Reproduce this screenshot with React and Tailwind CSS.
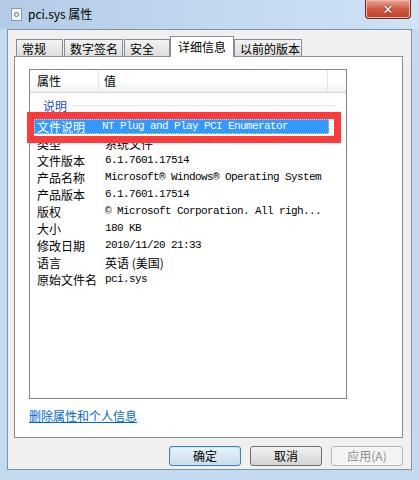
import React from 'react';

const cjk = '"Noto Sans CJK SC", "Liberation Sans", sans-serif';
const mono = '"Liberation Mono", "Noto Sans CJK SC", monospace';

const rows = [
  ['类型', '系统文件', true],
  ['文件版本', '6.1.7601.17514'],
  ['产品名称', 'Microsoft® Windows® Operating System'],
  ['产品版本', '6.1.7601.17514'],
  ['版权', '© Microsoft Corporation. All righ...'],
  ['大小', '180 KB'],
  ['修改日期', '2010/11/20 21:33'],
  ['语言', '英语 (美国)', true],
  ['原始文件名', 'pci.sys'],
];

function Tab({ label, w, active }) {
  if (active) {
    return (
      <div
        className="relative z-10 -mx-[1px] flex h-[21px] items-center justify-center border border-b-0 border-[#898c95] bg-white text-[12px] text-black"
        style={{ width: w }}
      >
        {label}
      </div>
    );
  }
  return (
    <div
      className="mt-[3px] flex h-[18px] items-center border border-b-0 border-[#898c95] bg-gradient-to-b from-[#f3f3f3] to-[#dcdcdc] pl-[5px] text-[12px] text-black"
      style={{ width: w }}
    >
      {label}
    </div>
  );
}

function Button({ label, kind }) {
  const base = 'flex h-[20px] w-[72px] items-center justify-center rounded-[3px] border text-[12px]';
  if (kind === 'default')
    return <div className={`${base} border-[#3c7fb1] bg-gradient-to-b from-[#eaf3fa] to-[#c8dcea] text-black shadow-[inset_0_0_0_1px_#bfe6fb]`}>{label}</div>;
  if (kind === 'disabled')
    return <div className={`${base} border-[#b5b9bd] bg-[#f4f4f4] text-[#8d8d8d]`}>{label}</div>;
  return <div className={`${base} border-[#707070] bg-gradient-to-b from-[#f3f3f3] to-[#d3d3d3] text-black`}>{label}</div>;
}

export default function App() {
  return (
    <div className="relative flex h-[480px] w-[419px] flex-col overflow-hidden bg-[#c4daf1]" style={{ fontFamily: cjk }}>
      {/* title bar */}
      <div className="flex h-[29px] items-start bg-gradient-to-r from-[#b3cbe6] via-[#c2d8ef] to-[#cfe2f6]">
        <div className="ml-[11px] mt-[8px] flex h-[13px] w-[11px] items-center justify-center border border-[#8a9bb0] bg-[#f4f6f8]">
          <div className="h-[5px] w-[5px] rounded-full border border-[#5b6f88]" />
        </div>
        <div className="ml-[6px] mt-[6px] text-[12px] leading-[16px] text-black">pci.sys 属性</div>
        <div className="ml-auto mr-[8px] flex h-[19px] w-[46px] items-center justify-center rounded-b-[4px] border border-t-0 border-[#6b2a20] bg-gradient-to-b from-[#e9a89a] via-[#cf5a42] to-[#c2402a] shadow-[inset_0_0_0_1px_#f0b7aa]">
          <span className="text-[13px] font-bold leading-none text-white" style={{ fontFamily: '"DejaVu Sans", sans-serif', textShadow: '0 0 2px #3a1a14' }}>✕</span>
        </div>
      </div>

      {/* client */}
      <div className="mx-[7px] mb-[10px] flex flex-1 flex-col border border-[#8093aa] bg-[#f0f0f0] pl-[6px] pr-[8px] pt-[6px]">
        {/* tabs */}
        <div className="flex h-[21px] items-start gap-[1px] pl-[2px]">
          <Tab label="常规" w={47} />
          <Tab label="数字签名" w={59} />
          <Tab label="安全" w={46} />
          <Tab label="详细信息" w={64} active />
          <Tab label="以前的版本" w={68} />
        </div>

        {/* panel */}
        <div className="-mt-[1px] flex h-[382px] flex-col border border-[#898c95] bg-white pl-[14px] pt-[12px]">
          <div className="flex h-[330px] w-[318px] flex-col border border-[#828790] bg-white">
            <div className="flex h-[23px] border-b border-[#d5d5d5] bg-gradient-to-b from-white via-white to-[#f0f1f3] text-[12px] text-black">
              <div className="flex w-[69px] items-center border-r border-[#e1e3e6] pl-[7px]">属性</div>
              <div className="flex w-[229px] items-center border-r border-[#e1e3e6] pl-[5px]">值</div>
            </div>
            <div className="flex h-[25px] items-center pl-[13px]">
              <span className="text-[12px] text-[#1e50b4]">说明</span>
              <div className="ml-[5px] mr-[10px] h-[1px] flex-1 bg-[#dfe4ea]" />
            </div>
            <div className="flex h-[17px] items-center pl-[4px]">
              <div className="flex h-[15px] w-[295px] items-center bg-[#3399ff] text-white outline-1 outline-dotted outline-[#b8d8ff] -outline-offset-1">
                <span className="w-[68px] pl-[3px] text-[12px]">文件说明</span>
                <span className="text-[11px] tracking-[-0.6px]" style={{ fontFamily: mono }}>NT Plug and Play PCI Enumerator</span>
              </div>
            </div>
            {rows.map(([k, v, cn]) => (
              <div key={k} className="flex h-[17px] items-center pl-[7px] text-black">
                <span className="w-[68px] text-[12px]">{k}</span>
                {cn ? (
                  <span className="text-[12px]">{v}</span>
                ) : (
                  <span className="whitespace-pre text-[11px] tracking-[-0.6px]" style={{ fontFamily: mono }}>{v}</span>
                )}
              </div>
            ))}
          </div>
          <div className="mt-[8px] text-[12px] text-[#0066cc] underline">删除属性和个人信息</div>
        </div>

        {/* buttons */}
        <div className="mt-[8px] flex justify-end gap-[9px]">
          <Button label="确定" kind="default" />
          <Button label="取消" />
          <Button label="应用(A)" kind="disabled" />
        </div>
      </div>

      {/* annotation */}
      <div className="pointer-events-none absolute left-[27px] top-[112px] h-[31px] w-[314px] border-[7px] border-[#fd3b3b]" />
    </div>
  );
}
